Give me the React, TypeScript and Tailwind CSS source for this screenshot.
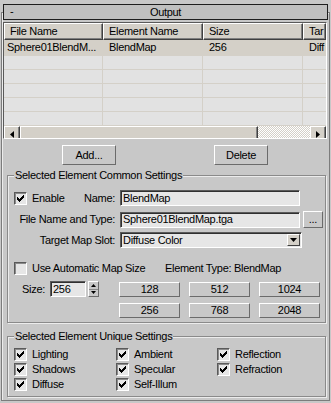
import React from "react";

const raised = "border border-t-white border-l-white border-r-[#6b6b6b] border-b-[#6b6b6b]";
const sunken = "border border-t-[#5a5a5a] border-l-[#5a5a5a] border-r-white border-b-white";

const Check = ({ checked }: { checked?: boolean }) => (
  <span
    className={`flex h-[13px] w-[13px] shrink-0 items-center justify-center bg-[#e6e6e6] shadow-[inset_1px_1px_0_#8a8a8a] ${sunken}`}
  >
    {checked && (
      <svg width="7" height="7" viewBox="0 0 7 7" shapeRendering="crispEdges">
        <path
          d="M0 2h1v3H0zM1 3h1v3H1zM2 4h1v3H2zM3 3h1v3H3zM4 2h1v3H4zM5 1h1v3H5zM6 0h1v3H6z"
          fill="#000"
        />
      </svg>
    )}
  </span>
);

const CheckItem = ({ label, checked, w }: { label: string; checked?: boolean; w: string }) => (
  <div className={`flex h-[13px] items-center gap-[5px] ${w}`}>
    <Check checked={checked} />
    <span>{label}</span>
  </div>
);

const Arrow = ({ dir }: { dir: "left" | "right" | "up" | "down" }) => {
  const d =
    dir === "left"
      ? "M4 0v7L0 3.5z"
      : dir === "right"
        ? "M0 0v7l4-3.5z"
        : dir === "down"
          ? "M0 0h7L3.5 4z"
          : "M0 4h7L3.5 0z";
  const horiz = dir === "left" || dir === "right";
  return (
    <svg width={horiz ? 4 : 7} height={horiz ? 7 : 4} viewBox={horiz ? "0 0 4 7" : "0 0 7 4"}>
      <path d={d} fill="#000" />
    </svg>
  );
};

const SizeBtn = ({ v }: { v: string }) => (
  <div className={`flex h-[15px] w-[61px] items-center justify-center bg-[#c8c8c8] ${raised}`}>{v}</div>
);

const Group = ({
  title,
  className,
  children,
}: {
  title: string;
  className: string;
  children: React.ReactNode;
}) => (
  <div
    className={`relative ml-[5px] w-[319px] border border-[#8a8a8a] shadow-[inset_1px_1px_0_#ececec,1px_1px_0_#ececec] pl-[6px] ${className}`}
  >
    <span className="absolute left-[6px] top-[-7px] bg-[#c8c8c8] px-[1px] leading-[13px]">{title}</span>
    {children}
  </div>
);

const cols = ["w-[99px]", "w-[100px]", "w-[100px]", "flex-1"];

export default function App() {
  const header = ["File Name", "Element Name", "Size", "Tar"];
  const row = ["Sphere01BlendM...", "BlendMap", "256", "Diff"];

  return (
    <div
      className="h-[403px] w-[331px] overflow-hidden bg-[#c8c8c8] pt-[12px] text-[11px] leading-[13px] tracking-[-0.3px] text-black"
      style={{ fontFamily: '"Liberation Sans", Arial, sans-serif' }}
    >
      <div className="ml-[1px] h-[389px] w-[329px] border border-[#7c7c7c] shadow-[inset_1px_1px_0_#ececec]">
        {/* rollout title */}
        <div className="relative -mt-[9px] ml-[1px] flex h-[16px] w-[325px] items-center border border-[#1e1e1e] bg-[#c0c0c0]">
          <span className="absolute left-[6px] top-[0px]">-</span>
          <span className="w-full text-center">Output</span>
        </div>

        {/* list */}
        <div className={`ml-[1px] mt-[2px] flex h-[117px] w-[324px] flex-col overflow-hidden bg-[#e2e2e2] ${sunken}`}>
          <div className="flex h-[17px] shrink-0">
            {header.map((h, i) => (
              <div
                key={h}
                className={`${cols[i]} flex items-center overflow-hidden whitespace-nowrap border border-t-white border-l-white border-r-[#404040] border-b-[#404040] bg-[#d4d0c8] pl-[5px] shadow-[inset_-1px_-1px_0_#808080]`}
              >
                {h}
              </div>
            ))}
          </div>
          <div className="flex h-[16px] shrink-0 border-b border-[#d4d0c8] bg-[#d4d0c8]">
            {row.map((c, i) => (
              <div
                key={i}
                className={`${cols[i]} flex items-center overflow-hidden whitespace-nowrap ${i === 0 ? "pl-[3px]" : "pl-[6px]"}`}
              >
                {c}
              </div>
            ))}
          </div>
          {[0, 1, 2, 3, 4].map((r) => (
            <div key={r} className="flex h-[14px] shrink-0 border-b border-[#d4d0c8]">
              {cols.map((c, i) => (
                <div key={i} className={`${c} ${i < 3 ? "border-r border-[#d4d0c8]" : ""}`} />
              ))}
            </div>
          ))}
          {/* scrollbar */}
          <div className="mt-auto flex h-[16px] shrink-0 bg-[#d4d0c8]">
            <div className={`flex w-[16px] items-center justify-center bg-[#d4d0c8] ${raised} border-r-[#404040] border-b-[#404040] shadow-[inset_-1px_-1px_0_#808080]`}>
              <Arrow dir="left" />
            </div>
            <div className={`w-[238px] bg-[#d4d0c8] ${raised} border-r-[#404040] border-b-[#404040] shadow-[inset_-1px_-1px_0_#808080]`} />
            <div className="flex-1 bg-[image:repeating-conic-gradient(#d4d0c8_0%_25%,#ffffff_0%_50%)] bg-[length:2px_2px]" />
            <div className={`flex w-[16px] items-center justify-center bg-[#d4d0c8] ${raised} border-r-[#404040] border-b-[#404040] shadow-[inset_-1px_-1px_0_#808080]`}>
              <Arrow dir="right" />
            </div>
          </div>
        </div>

        {/* add / delete */}
        <div className="mt-[6px] flex">
          <div className={`ml-[60px] flex h-[20px] w-[54px] items-center justify-center ${raised}`}>Add...</div>
          <div className={`ml-[98px] flex h-[20px] w-[54px] items-center justify-center ${raised}`}>Delete</div>
        </div>

        {/* common settings */}
        <Group title="Selected Element Common Settings" className="mt-[10px] h-[148px] pt-[14px]">
          <div className="flex h-[16px] items-center">
            <div className="flex w-[102px] items-center justify-between pr-[1px]">
              <div className="flex items-center gap-[5px]">
                <Check checked />
                <span>Enable</span>
              </div>
              <span>Name:</span>
            </div>
            <div className={`ml-[4px] flex h-[16px] w-[180px] items-center bg-[#e6e6e6] pl-[2px] shadow-[inset_1px_1px_0_#303030] ${sunken}`}>
              BlendMap
            </div>
          </div>

          <div className="mt-[5px] flex h-[17px] items-center">
            <div className="w-[102px] pr-[1px] text-right">File Name and Type:</div>
            <div className={`ml-[4px] flex h-[16px] w-[180px] items-center bg-[#e6e6e6] pl-[2px] shadow-[inset_1px_1px_0_#303030] ${sunken}`}>
              Sphere01BlendMap.tga
            </div>
            <div className={`ml-[3px] flex h-[17px] w-[20px] items-center justify-center ${raised}`}>...</div>
          </div>

          <div className="mt-[4px] flex h-[16px] items-center">
            <div className="w-[102px] pr-[1px] text-right">Target Map Slot:</div>
            <div className={`ml-[4px] flex h-[16px] w-[182px] items-center justify-between bg-[#e6e6e6] pl-[2px] pr-[1px] shadow-[inset_1px_1px_0_#303030] ${sunken}`}>
              <span>Diffuse Color</span>
              <div className={`flex h-[12px] w-[13px] items-center justify-center bg-[#d4d0c8] ${raised} border-r-[#404040] border-b-[#404040]`}>
                <Arrow dir="down" />
              </div>
            </div>
          </div>

          <div className="mt-[14px] flex h-[13px] items-center">
            <div className="flex w-[151px] items-center gap-[5px]">
              <Check />
              <span>Use Automatic Map Size</span>
            </div>
            <span>Element Type: BlendMap</span>
          </div>

          <div className="mt-[6px] flex h-[16px] items-center">
            <div className="w-[36px] pl-[8px]">Size:</div>
            <div className={`flex h-[16px] w-[36px] items-center bg-[#e6e6e6] pl-[2px] shadow-[inset_1px_1px_0_#303030] ${sunken}`}>
              256
            </div>
            <div className={`ml-[2px] flex h-[16px] w-[11px] flex-col ${raised}`}>
              <div className="flex flex-1 items-center justify-center border-b border-[#8a8a8a]">
                <svg width="5" height="3" viewBox="0 0 5 3"><path d="M0 3h5L2.5 0z" fill="#000" /></svg>
              </div>
              <div className="flex flex-1 items-center justify-center">
                <svg width="5" height="3" viewBox="0 0 5 3"><path d="M0 0h5L2.5 3z" fill="#000" /></svg>
              </div>
            </div>
            <div className="ml-[20px] flex gap-[9px]">
              <SizeBtn v="128" />
              <SizeBtn v="512" />
              <SizeBtn v="1024" />
            </div>
          </div>

          <div className="mt-[6px] flex gap-[9px] pl-[105px]">
            <SizeBtn v="256" />
            <SizeBtn v="768" />
            <SizeBtn v="2048" />
          </div>
        </Group>

        {/* unique settings */}
        <Group title="Selected Element Unique Settings" className="mt-[13px] h-[61px] pt-[11px]">
          <div className="flex flex-col gap-[2px]">
            <div className="flex">
              <CheckItem label="Lighting" checked w="w-[102px]" />
              <CheckItem label="Ambient" checked w="w-[101px]" />
              <CheckItem label="Reflection" checked w="w-[100px]" />
            </div>
            <div className="flex">
              <CheckItem label="Shadows" checked w="w-[102px]" />
              <CheckItem label="Specular" checked w="w-[101px]" />
              <CheckItem label="Refraction" checked w="w-[100px]" />
            </div>
            <div className="flex">
              <CheckItem label="Diffuse" checked w="w-[102px]" />
              <CheckItem label="Self-Illum" checked w="w-[101px]" />
            </div>
          </div>
        </Group>
      </div>
    </div>
  );
}
